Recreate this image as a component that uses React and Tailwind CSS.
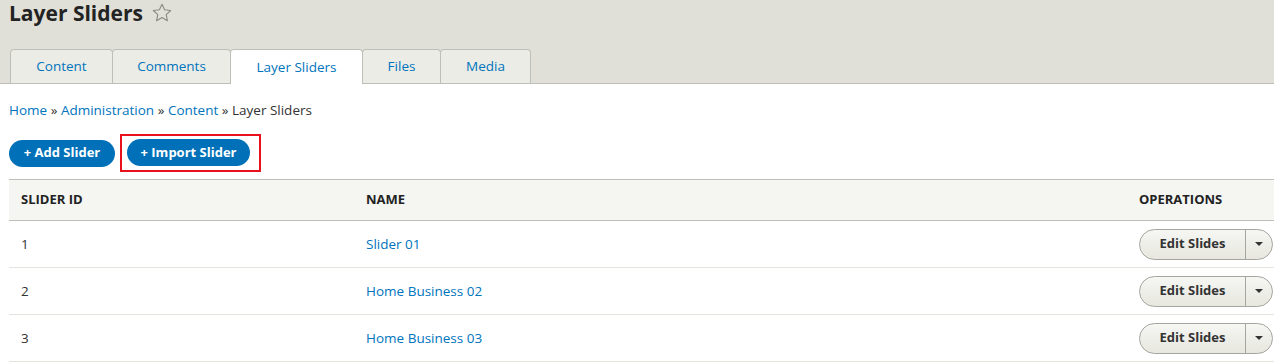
const font = { fontFamily: '"Open Sans", "DejaVu Sans", sans-serif' };

const tabs = [
    { label: "Content", width: "w-[103px]" },
    { label: "Comments", width: "w-[119px]" },
    { label: "Layer Sliders", width: "w-[133px]", active: true },
    { label: "Files", width: "w-[79px]" },
    { label: "Media", width: "w-[91px]" },
];

const sliders = [
    { id: 1, name: "Slider 01" },
    { id: 2, name: "Home Business 02" },
    { id: 3, name: "Home Business 03" },
];

function Star() {
    return (
        <svg width="20" height="19" viewBox="0 0 20 19" className="ml-[9px] mt-[3px]">
            <path
                d="M10 1.2l2.6 5.6 6.1.7-4.5 4.2 1.2 6-5.4-3.1-5.4 3.1 1.2-6-4.5-4.2 6.1-.7z"
                fill="none"
                stroke="#8a8a80"
                strokeWidth="1.1"
                strokeLinejoin="round"
            />
        </svg>
    );
}

function EditSlides() {
    return (
        <div className="flex h-[31px] w-[134px] overflow-hidden rounded-full border border-[#a6a6a0] bg-gradient-to-b from-[#f6f6f3] to-[#e7e7df]">
            <button className="flex-1 text-[13px] font-bold text-[#333]">
                Edit Slides
            </button>
            <span className="flex w-[27px] items-center justify-center border-l border-[#a6a6a0]">
                <span className="h-0 w-0 border-x-[4px] border-t-[4px] border-x-transparent border-t-[#333]" />
            </span>
        </div>
    );
}

export default function App() {
    return (
        <div className="min-h-[363px] bg-white text-[13.5px] text-[#333]" style={font}>
            <div className="border-b border-[#bfbfba] bg-[#e0e0d8]">
                <div className="flex h-[49px] items-start pl-[9px]">
                    <h1 className="text-[21px] font-bold leading-[26px] text-[#232323]">
                        Layer Sliders
                    </h1>
                    <Star />
                </div>
                <div className="flex pl-[10px]">
                    {tabs.map((tab) => (
                        <a
                            key={tab.label}
                            className={
                                tab.active
                                    ? `${tab.width} -mb-px -ml-px flex h-[35px] items-center justify-center rounded-t-[4px] border border-b-0 border-[#bfbfba] bg-white text-[#0074bd]`
                                    : `${tab.width} -ml-px flex h-[34px] items-center justify-center rounded-t-[4px] border border-b-0 border-[#bfbfba] bg-[#ecece6] text-[#0074bd] first:ml-0`
                            }
                        >
                            {tab.label}
                        </a>
                    ))}
                </div>
            </div>

            <div className="pl-[9px] pt-[17px] leading-[18px]">
                <a className="text-[#0074bd]">Home</a>
                <span> » </span>
                <a className="text-[#0074bd]">Administration</a>
                <span> » </span>
                <a className="text-[#0074bd]">Content</a>
                <span> » </span>
                <span>Layer Sliders</span>
            </div>

            <div className="flex items-center pl-[9px] pt-[15px]">
                <button className="h-[27px] w-[106px] rounded-full bg-[#0071b8] text-[13px] font-bold text-white">
                    + Add Slider
                </button>
                <div className="ml-[5px] border-2 border-[#e8101a] pb-[4px] pl-[5px] pr-[9px] pt-[3px]">
                    <button className="block h-[27px] w-[123px] rounded-full bg-[#0071b8] text-[13px] font-bold text-white">
                        + Import Slider
                    </button>
                </div>
            </div>

            <table className="ml-[9px] mt-[7px] w-[1265px] table-fixed border-collapse">
                <thead>
                    <tr className="h-[41px] border-y border-[#bfbfba] bg-[#f5f5f2] text-left text-[13px] font-bold uppercase text-[#222]">
                        <th className="w-[345px] pl-[12px]">Slider ID</th>
                        <th className="w-[773px] pl-[12px]">Name</th>
                        <th className="pl-[12px]">Operations</th>
                    </tr>
                </thead>
                <tbody>
                    {sliders.map((slider) => (
                        <tr key={slider.id} className="h-[47px] border-b border-[#e6e4df]">
                            <td className="pl-[12px]">{slider.id}</td>
                            <td className="pl-[12px]">
                                <a className="text-[#0074bd]">{slider.name}</a>
                            </td>
                            <td className="pl-[12px]">
                                <EditSlides />
                            </td>
                        </tr>
                    ))}
                </tbody>
            </table>
        </div>
    );
}
